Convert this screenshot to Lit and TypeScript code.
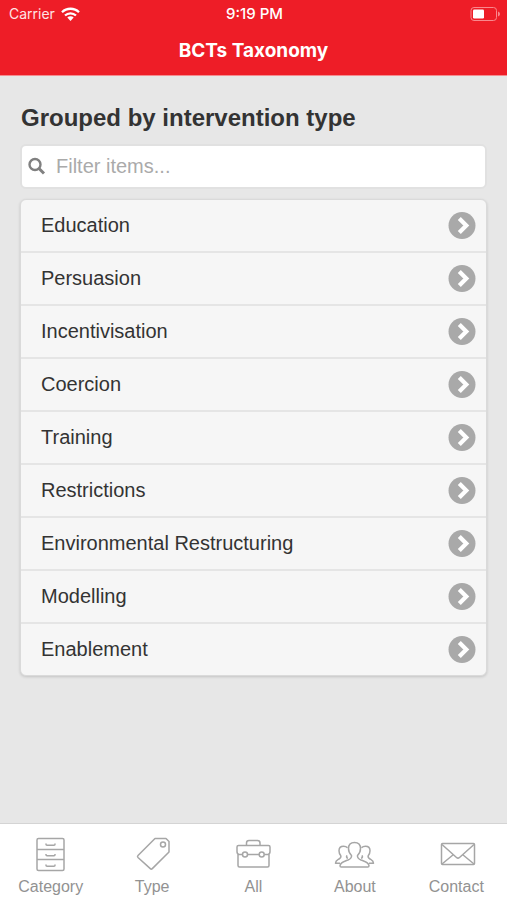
import { LitElement, html, css, svg } from "lit";
import { customElement, state } from "lit/decorators.js";

const GROUPS = [
  "Education",
  "Persuasion",
  "Incentivisation",
  "Coercion",
  "Training",
  "Restrictions",
  "Environmental Restructuring",
  "Modelling",
  "Enablement",
];

const drawer = svg`
  <rect x="6" y="1.500" width="27" height="32" rx="1.500"/>
  <path d="M6 12.500h27M6 22.500h27"/>
  <path d="M15 6.500v.700q0 1 1 1h7q1 0 1-1V6.500M15 17v.700q0 1 1 1h7q1 0 1-1V17M15 27.500v.700q0 1 1 1h7q1 0 1-1v-.700"/>`;
const tag = svg`
  <path d="M22 1.500h11l3 3v10.500L19.300 31.600q-1 1-2 0L5 20.500q-1-1 0-2z"/>
  <circle cx="30" cy="7.500" r="2.500"/>`;
const briefcase = svg`
  <path d="M12.500 8.500V6Q12.500 3.500 15 3.500h8.500Q26 3.500 26 6v2.500"/>
  <path d="M8.500 17.500H5q-2-.500-2-3V10Q3 8.500 4.500 8.500h30Q36 8.500 36 10v4.500q0 2.500-2 3h-3.500M13.500 17.500h11.500M4 17v11.500Q4 30 5.500 30h28q1.500 0 1.500-1.500V17"/>
  <circle cx="11" cy="17.500" r="2.500"/><circle cx="27.700" cy="17.500" r="2.500"/>`;
const people = svg`
  <path d="M19.500 5.500C15.500 5.500 13.500 8 13.500 11.500c0 3 1 5 3 7 .400 2.300-.800 3.300-3.500 4.500C8 25 5.300 25.500 5 28.700q0 1.300 1.200 1.300h26.600q1.200 0 1.200-1.300C33.700 25.500 31 25 26 23c-2.700-1.200-3.900-2.200-3.500-4.500 2-2 3-4 3-7 0-3.500-2-6-6-6z"/>
  <path d="M12.500 10.700C11.500 9.700 10.200 9.300 8.500 9.300 5.500 9.300 4 11 4 13.800c0 2.200.700 3.700 1.800 5 .500 1.700-.300 2.400-1.800 3.200C1.800 23.200.500 23.500.500 26.200h4.500M12 18.300c-.700 1.200-.500 2.400.800 3.200"/>
  <path d="M26.500 10.700c1-1 2.300-1.400 4-1.400 3 0 4.500 1.700 4.500 4.500 0 2.200-.700 3.700-1.800 5-.500 1.700.300 2.400 1.800 3.200 2.200 1.200 3.500 1.500 3.500 4.200h-4.500M27 18.300c.700 1.200.500 2.400-.800 3.200"/>`;
const envelope = svg`
  <rect x="4.500" y="6.500" width="33" height="21" rx="1"/>
  <path d="M5 7.500L19.500 20.500q1.500 1.300 3 0L37 7.500M5 27l11.500-9.500M37 27l-11.500-9.500"/>`;

const TABS = [
  { label: "Category", icon: drawer },
  { label: "Type", icon: tag },
  { label: "All", icon: briefcase },
  { label: "About", icon: people },
  { label: "Contact", icon: envelope },
];

@customElement("app-root")
export class AppRoot extends LitElement {
  @state() private query = "";

  static styles = css`
    :host {
      display: flex;
      flex-direction: column;
      min-height: 100vh;
      background: #e7e7e7;
      color: #333;
      font-family: "Liberation Sans", Arial, sans-serif;
    }
    * { box-sizing: border-box; }
    .top {
      background: #ee1d27;
      color: #fff;
      font-family: Inter, sans-serif;
      border-bottom: 1px solid #f58b8f;
    }
    .status {
      display: grid;
      grid-template-columns: 1fr auto 1fr;
      align-items: center;
      height: 27px;
      padding: 0 7px 0 9px;
      font-size: 14px;
    }
    .carrier { display: flex; align-items: center; gap: 6px; color: #ffe4e5; }
    .clock { font-size: 15px; font-weight: 500; }
    .battery { justify-self: end; }
    .status svg { display: block; }
    .title {
      margin: 0;
      font-size: 19px;
      line-height: 24px;
      padding: 12px 0;
      font-weight: 700;
      text-align: center;
    }
    main { flex: 1; padding: 26px 20px 24px; }
    h2 { margin: 0 1px 10px; font-size: 24px; line-height: 32px; }
    .search {
      display: flex;
      align-items: center;
      height: 45px;
      margin: 0 0 10px;
      padding-left: 6px;
      background: #fff;
      border: 2px solid #e1e1e1;
      border-radius: 6px;
    }
    .search svg { flex: none; }
    .search input {
      flex: 1;
      min-width: 0;
      border: 0;
      outline: 0;
      padding: 0 10px;
      background: none;
      color: #333;
      font: 20px "Liberation Sans", Arial, sans-serif;
    }
    .search input::placeholder { color: #aaa; opacity: 1; }
    .list {
      list-style: none;
      margin: 0;
      padding: 0;
      background: #f6f6f6;
      border: 1px solid #dadada;
      border-radius: 6px;
      box-shadow: 0 1px 3px rgba(0, 0, 0, 0.16);
    }
    .list li + li { border-top: 2px solid #e5e5e5; }
    .row {
      display: flex;
      align-items: center;
      justify-content: space-between;
      height: 51px;
      padding: 0 10px 0 20px;
      color: #333;
      text-decoration: none;
      font-size: 20px;
    }
    .tabs {
      display: grid;
      grid-template-columns: repeat(5, 1fr);
      background: #fff;
      border-top: 1px solid #d4d4d4;
      height: 77px;
    }
    .tab {
      display: flex;
      flex-direction: column;
      align-items: center;
      gap: 4px;
      padding: 13px 0 0;
      border: 0;
      background: none;
      color: #929292;
      font: 16px/20px "Liberation Sans", Arial, sans-serif;
    }
    .glyph {
      fill: none;
      stroke: #a6a6a6;
      stroke-width: 1.5;
      stroke-linejoin: round;
      overflow: visible;
    }
  `;

  render() {
    const shown = GROUPS.filter((g) =>
      g.toLowerCase().includes(this.query.toLowerCase())
    );
    return html`
      <header class="top">
        <div class="status">
          <span class="carrier">Carrier
            <svg width="19" height="14" viewBox="0 0 19 14" fill="none" stroke="#fff" stroke-width="2.300" aria-hidden="true">
              <path d="M1 5.200a12.200 12.200 0 0 1 17 0M4 8.500a8 8 0 0 1 11 0"/>
              <path d="M6.300 10.500a4.600 4.600 0 0 1 6.400 0L9.500 14z" fill="#fff" stroke="none"/>
            </svg>
          </span>
          <span class="clock">9:19 PM</span>
          <svg class="battery" width="30" height="14" viewBox="0 0 30 14" aria-hidden="true">
            <rect x="1" y="0.500" width="25.500" height="13" rx="3" fill="none" stroke="#f9888d"/>
            <rect x="3" y="2.500" width="11" height="9" rx="1.200" fill="#fff"/>
            <path d="M28 4.500q2 .700 2 2.500t-2 2.500z" fill="#f9888d"/>
          </svg>
        </div>
        <h1 class="title">BCTs Taxonomy</h1>
      </header>
      <main>
        <h2>Grouped by intervention type</h2>
        <label class="search">
          <svg width="18" height="20" viewBox="0 0 18 20" fill="none" stroke="#808080" aria-hidden="true">
            <circle cx="7" cy="7.500" r="5.500" stroke-width="2.400"/>
            <path d="M11 11.500l5 5" stroke-width="3"/>
          </svg>
          <input type="text" placeholder="Filter items..." aria-label="Filter items"
            .value=${this.query}
            @input=${(e: Event) => (this.query = (e.target as HTMLInputElement).value)} />
        </label>
        <ul class="list">
          ${shown.map(
            (g) => html`<li>
              <a class="row" href="#">${g}
                <svg width="28" height="28" viewBox="0 0 28 28" aria-hidden="true">
                  <circle cx="14" cy="13.500" r="13.500" fill="#a9a9a9"/>
                  <path d="M11.300 6.500l7 7-7 7" fill="none" stroke="#fff" stroke-width="4.200"/>
                </svg>
              </a>
            </li>`
          )}
        </ul>
      </main>
      <nav class="tabs">
        ${TABS.map(
          (t) => html`<button class="tab" type="button">
            <svg class="glyph" width="39" height="36" viewBox="0 0 39 36" aria-hidden="true">${t.icon}</svg>
            <span>${t.label}</span>
          </button>`
        )}
      </nav>
    `;
  }
}
